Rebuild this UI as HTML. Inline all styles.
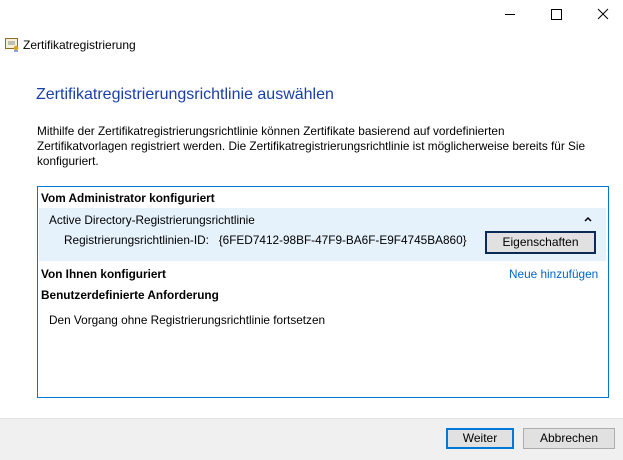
<!DOCTYPE html><html><head><meta charset="utf-8"><style>
body{margin:0;width:623px;height:459px;background:#fff;font-family:"Liberation Sans",sans-serif;font-size:11.8px;color:#000;position:relative;overflow:hidden}
.a{position:absolute;white-space:nowrap}
.b{font-weight:bold}
.btn{position:absolute;background:#e1e1e1;border:1px solid #adadad;box-sizing:border-box;text-align:center;font-size:12px}
</style></head><body>
<div class="a" style="left:505px;top:14px;width:10px;height:1px;background:#000"></div>
<div class="a" style="left:551px;top:9px;width:9px;height:9px;border:1px solid #000"></div>
<svg class="a" style="left:597px;top:8px" width="12" height="12"><path d="M1 1L11 11M11 1L1 11" stroke="#000" stroke-width="1"/></svg>
<svg class="a" style="left:5px;top:38px" width="14" height="14"><rect x="0.5" y="0.5" width="12" height="10" fill="#f7f0d8" stroke="#8a6d2b"/><path d="M3 4h7M3 6h7" stroke="#8a8a8a"/><circle cx="11" cy="10" r="2.3" fill="#e0a020"/><path d="M10 12v2M12 12v2" stroke="#2050c0"/></svg>
<div class="a" style="left:23px;top:38px;font-size:12px">Zertifikatregistrierung</div>
<div class="a" style="left:36px;top:86px;font-size:16px;color:#1a3fa8">Zertifikatregistrierungsrichtlinie auswählen</div>
<div class="a" style="left:37px;top:124px;line-height:15px">Mithilfe der Zertifikatregistrierungsrichtlinie können Zertifikate basierend auf vordefinierten<br>Zertifikatvorlagen registriert werden. Die Zertifikatregistrierungsrichtlinie ist möglicherweise bereits für Sie<br>konfiguriert.</div>
<div class="a" style="left:37px;top:186px;width:570px;height:210px;border:1px solid #0078d7"></div>
<div class="a b" style="left:41px;top:191px">Vom Administrator konfiguriert</div>
<div class="a" style="left:39px;top:208px;width:567px;height:53px;background:#e5f1fb"></div>
<div class="a" style="left:49px;top:213px">Active Directory-Registrierungsrichtlinie</div>
<svg class="a" style="left:584px;top:216px" width="8" height="6"><path d="M1 5L4 2L7 5" stroke="#000" stroke-width="1.5" fill="none"/></svg>
<div class="a" style="left:64px;top:233px">Registrierungsrichtlinien-ID:&nbsp;&nbsp; {6FED7412-98BF-47F9-BA6F-E9F4745BA860}</div>
<div class="btn" style="left:485px;top:231px;width:111px;height:23px;border:2px solid #0b2a55;line-height:19px">Eigenschaften</div>
<div class="a b" style="left:41px;top:267px">Von Ihnen konfiguriert</div>
<div class="a" style="left:509px;top:267px;color:#0066cc">Neue hinzufügen</div>
<div class="a b" style="left:41px;top:288px">Benutzerdefinierte Anforderung</div>
<div class="a" style="left:49px;top:313px">Den Vorgang ohne Registrierungsrichtlinie fortsetzen</div>
<div class="a" style="left:0;top:418px;width:623px;height:41px;background:#f0f0f0;border-top:1px solid #e3e3e3"></div>
<div class="btn" style="left:446px;top:428px;width:68px;height:21px;border:2px solid #0078d7;line-height:17px">Weiter</div>
<div class="btn" style="left:523px;top:428px;width:92px;height:21px;line-height:19px">Abbrechen</div>
</body></html>
